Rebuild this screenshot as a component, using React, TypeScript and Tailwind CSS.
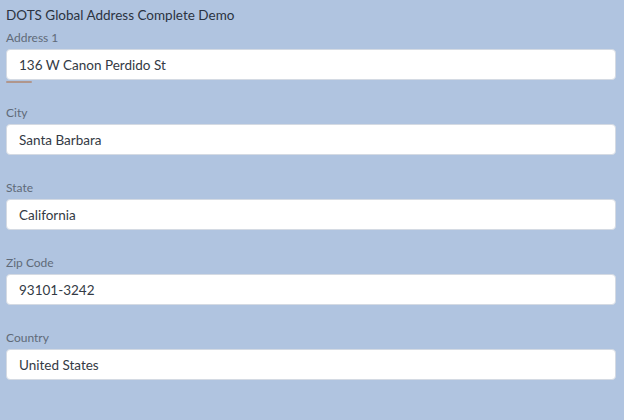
import React from 'react';

const fields = [
  { label: 'Address 1', value: '136 W Canon Perdido St' },
  { label: 'City', value: 'Santa Barbara' },
  { label: 'State', value: 'California' },
  { label: 'Zip Code', value: '93101-3242' },
  { label: 'Country', value: 'United States' },
];

export default function App() {
  return (
    <div
      className="w-[624px] h-[420px] bg-[#b0c4e0] pl-[6px] pr-[8px] pt-[6px] text-[13.5px]"
      style={{ fontFamily: 'Lato, "Open Sans", sans-serif' }}
    >
      <div className="leading-[18px] text-[#2b3340]">DOTS Global Address Complete Demo</div>
      <div className="mt-[5px]">
        {fields.map((f, i) => (
          <div key={f.label} className="mb-[24px]">
            <label className="block text-[12px] leading-[18px] text-[#5f6a78] mb-[2px]">{f.label}</label>
            <div className="relative">
              <input
                readOnly
                value={f.value}
                className="w-full h-[31px] bg-white border border-[#d4dae3] rounded-[4px] pl-[12px] text-[13.5px] text-[#333a44] outline-none"
              />
              {i === 0 && (
                <div className="absolute left-0 top-[32px] w-[26px] h-[2px] bg-[#b0968c] rounded-full" />
              )}
            </div>
          </div>
        ))}
      </div>
    </div>
  );
}
